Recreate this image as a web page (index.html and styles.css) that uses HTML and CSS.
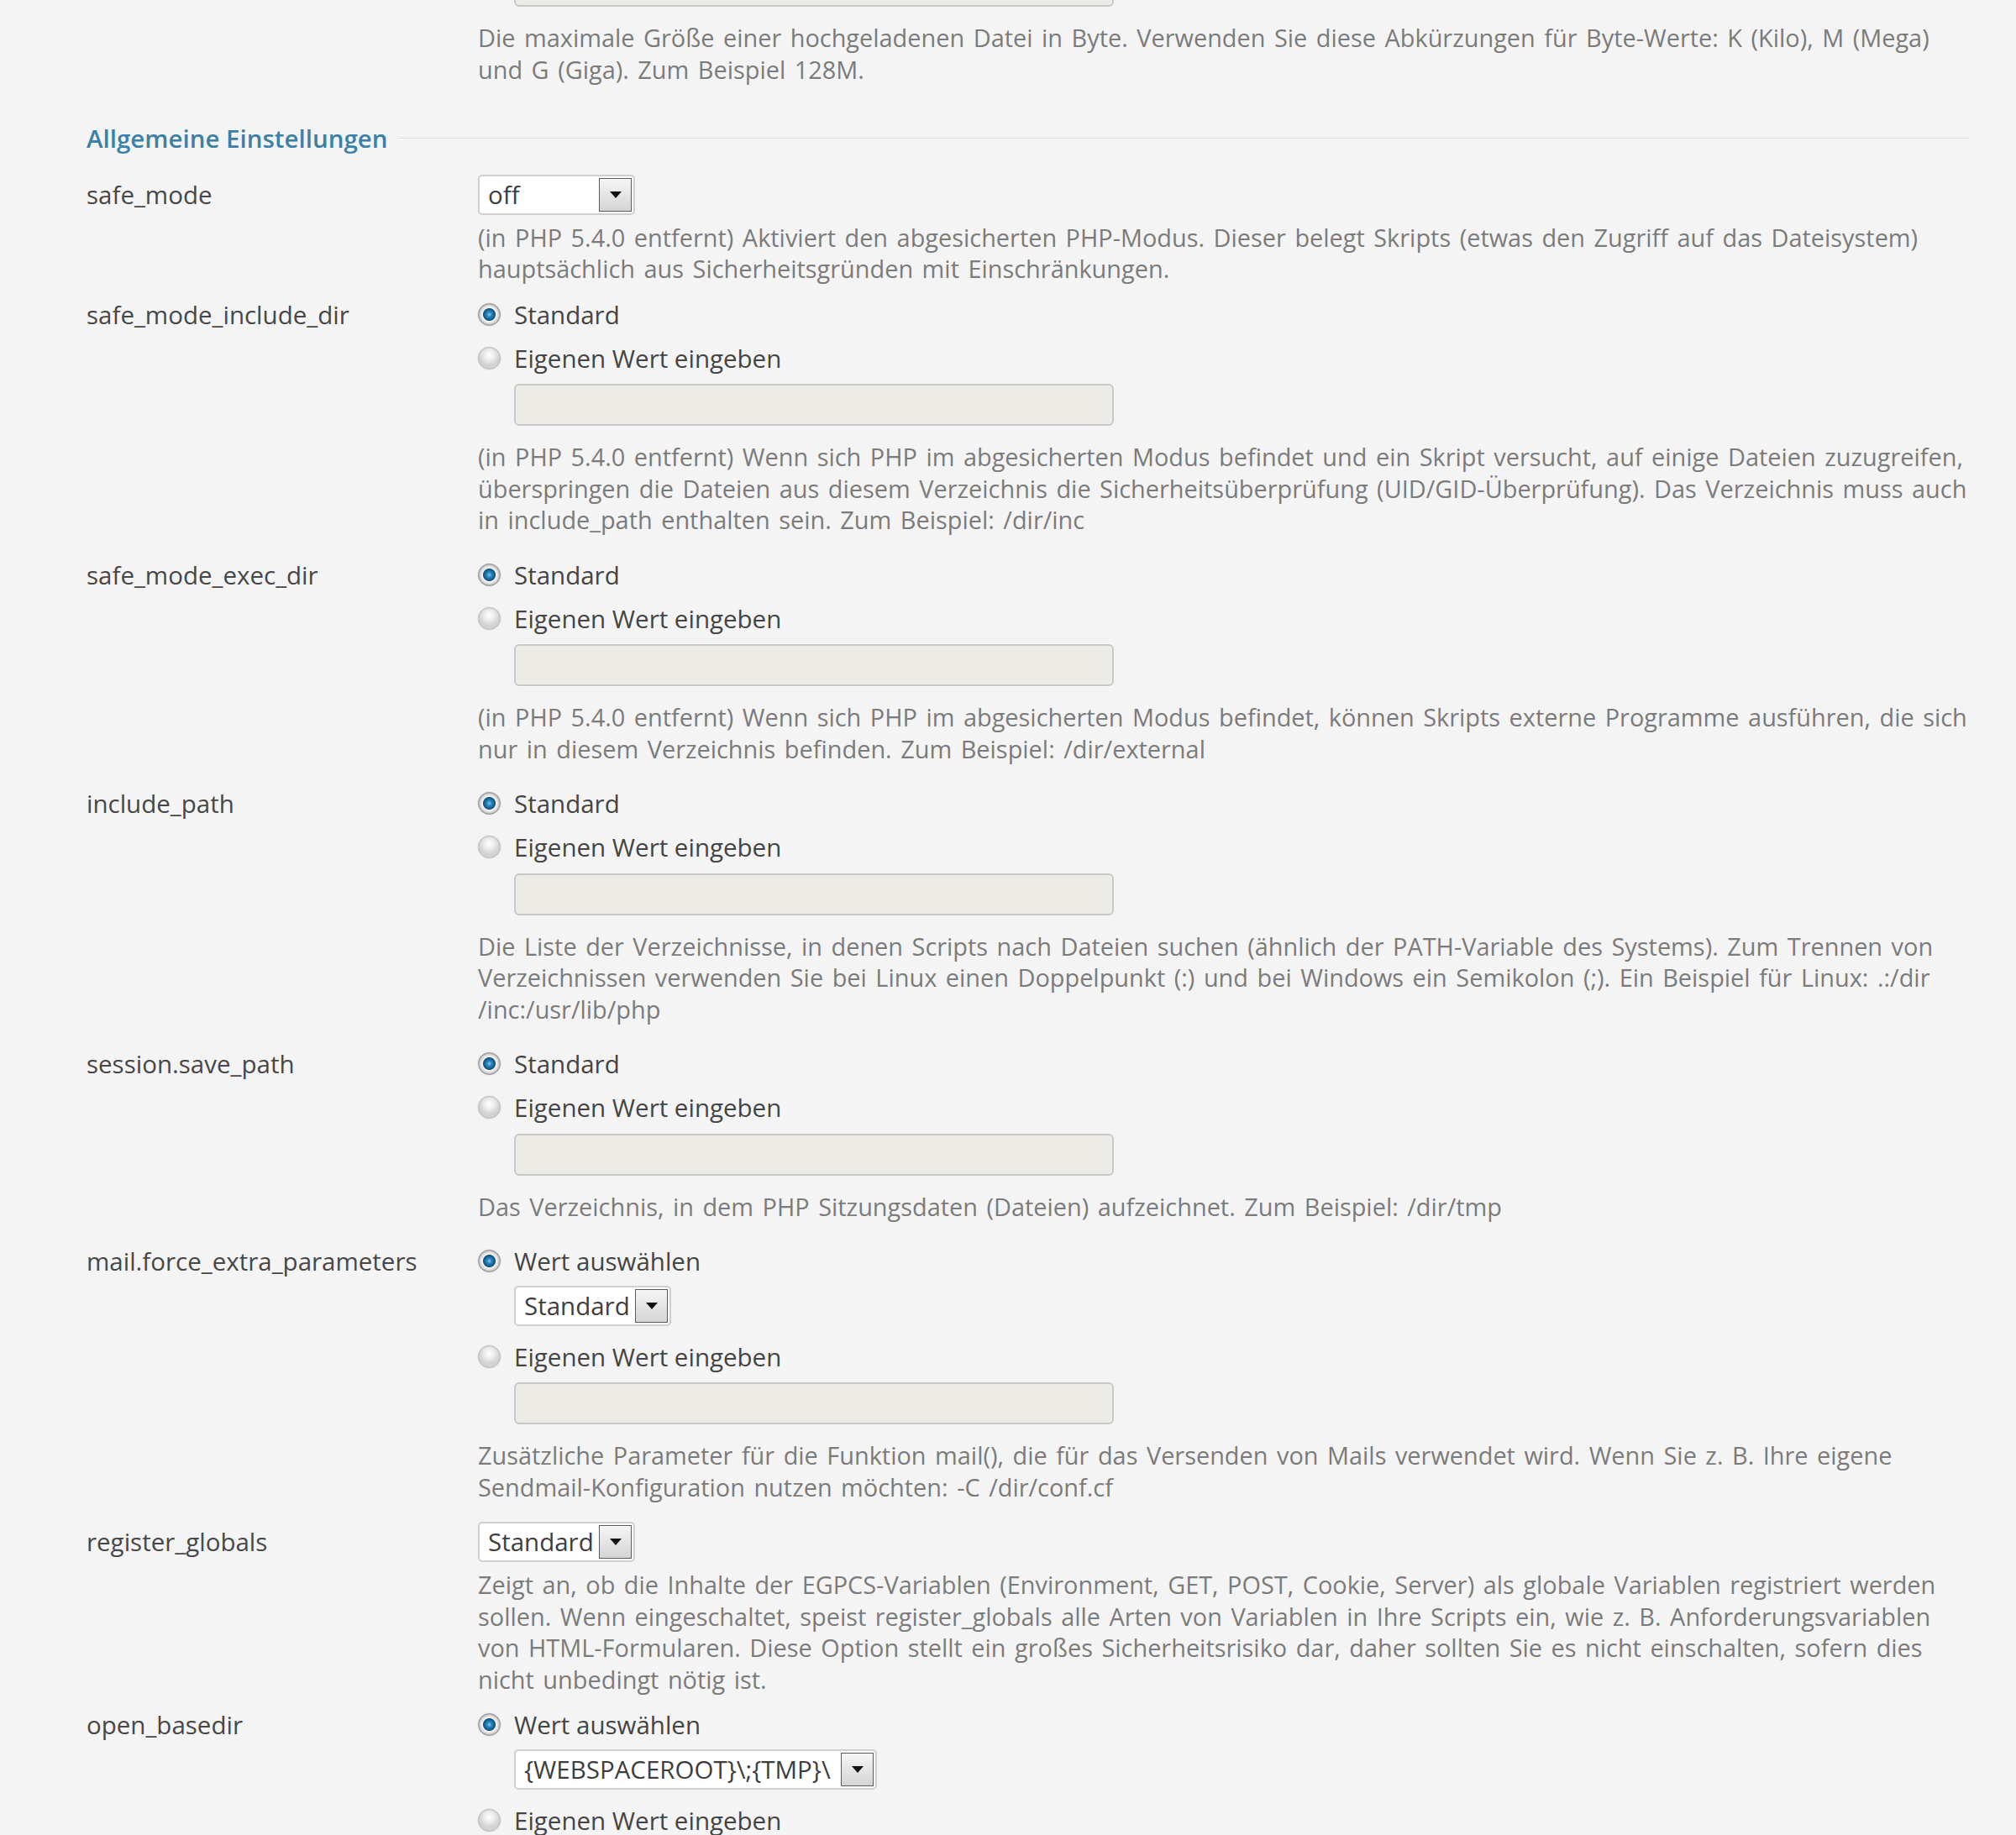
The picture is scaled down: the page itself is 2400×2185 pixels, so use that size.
FILE: index.html
```html
<!DOCTYPE html>
<html lang="de">

<head>
    <meta charset="UTF-8">
    <meta name="viewport" content="width=device-width, initial-scale=1.0">
    <title>PHP-Einstellungen</title>

    <link rel="stylesheet" href="styles.css">
</head>

<body>
    <div class="settings">

        <!-- tail of the previous group, cut off by the scroll position -->
        <div class="row row-radio">
            <div class="label"></div>
            <div class="field">
                <input class="text" type="text" disabled>
                <p class="hint">Die maximale Größe einer hochgeladenen Datei in Byte. Verwenden Sie diese Abkürzungen für Byte-Werte: K (Kilo), M (Mega) und G (Giga). Zum Beispiel 128M.</p>
            </div>
        </div>

        <h2 class="group-title">Allgemeine Einstellungen</h2>

        <div class="row">
            <div class="label">safe_mode</div>
            <div class="field">
                <div class="select"><span class="select-value">off</span><span class="select-btn"></span></div>
                <p class="hint">(in PHP 5.4.0 entfernt) Aktiviert den abgesicherten PHP-Modus. Dieser belegt Skripts (etwas den Zugriff auf das Dateisystem) hauptsächlich aus Sicherheitsgründen mit Einschränkungen.</p>
            </div>
        </div>

        <div class="row row-radio">
            <div class="label">safe_mode_include_dir</div>
            <div class="field">
                <label class="option"><span class="radio checked"></span>Standard</label>
                <label class="option"><span class="radio"></span>Eigenen Wert eingeben</label>
                <input class="text" type="text" disabled>
                <p class="hint">(in PHP 5.4.0 entfernt) Wenn sich PHP im abgesicherten Modus befindet und ein Skript versucht, auf einige Dateien zuzugreifen, überspringen die Dateien aus diesem Verzeichnis die Sicherheitsüberprüfung (UID/GID-Überprüfung). Das Verzeichnis muss auch in include_path enthalten sein. Zum Beispiel: /dir/inc</p>
            </div>
        </div>

        <div class="row row-radio">
            <div class="label">safe_mode_exec_dir</div>
            <div class="field">
                <label class="option"><span class="radio checked"></span>Standard</label>
                <label class="option"><span class="radio"></span>Eigenen Wert eingeben</label>
                <input class="text" type="text" disabled>
                <p class="hint">(in PHP 5.4.0 entfernt) Wenn sich PHP im abgesicherten Modus befindet, können Skripts externe Programme ausführen, die sich nur in diesem Verzeichnis befinden. Zum Beispiel: /dir/external</p>
            </div>
        </div>

        <div class="row row-radio">
            <div class="label">include_path</div>
            <div class="field">
                <label class="option"><span class="radio checked"></span>Standard</label>
                <label class="option"><span class="radio"></span>Eigenen Wert eingeben</label>
                <input class="text" type="text" disabled>
                <p class="hint">Die Liste der Verzeichnisse, in denen Scripts nach Dateien suchen (ähnlich der PATH-Variable des Systems). Zum Trennen von Verzeichnissen verwenden Sie bei Linux einen Doppelpunkt (:) und bei Windows ein Semikolon (;). Ein Beispiel für Linux: .:/dir /inc:/usr/lib/php</p>
            </div>
        </div>

        <div class="row row-radio">
            <div class="label">session.save_path</div>
            <div class="field">
                <label class="option"><span class="radio checked"></span>Standard</label>
                <label class="option"><span class="radio"></span>Eigenen Wert eingeben</label>
                <input class="text" type="text" disabled>
                <p class="hint">Das Verzeichnis, in dem PHP Sitzungsdaten (Dateien) aufzeichnet. Zum Beispiel: /dir/tmp</p>
            </div>
        </div>

        <div class="row row-radio">
            <div class="label">mail.force_extra_parameters</div>
            <div class="field">
                <label class="option"><span class="radio checked"></span>Wert auswählen</label>
                <div class="select select-inline"><span class="select-value">Standard</span><span class="select-btn"></span></div>
                <label class="option"><span class="radio"></span>Eigenen Wert eingeben</label>
                <input class="text" type="text" disabled>
                <p class="hint">Zusätzliche Parameter für die Funktion mail(), die für das Versenden von Mails verwendet wird. Wenn Sie z. B. Ihre eigene Sendmail-Konfiguration nutzen möchten: -C /dir/conf.cf</p>
            </div>
        </div>

        <div class="row">
            <div class="label">register_globals</div>
            <div class="field">
                <div class="select"><span class="select-value">Standard</span><span class="select-btn"></span></div>
                <p class="hint">Zeigt an, ob die Inhalte der EGPCS-Variablen (Environment, GET, POST, Cookie, Server) als globale Variablen registriert werden sollen. Wenn eingeschaltet, speist register_globals alle Arten von Variablen in Ihre Scripts ein, wie z. B. Anforderungsvariablen von HTML-Formularen. Diese Option stellt ein großes Sicherheitsrisiko dar, daher sollten Sie es nicht einschalten, sofern dies nicht unbedingt nötig ist.</p>
            </div>
        </div>

        <div class="row row-radio">
            <div class="label">open_basedir</div>
            <div class="field">
                <label class="option"><span class="radio checked"></span>Wert auswählen</label>
                <div class="select select-inline select-wide"><span class="select-value">{WEBSPACEROOT}\;{TMP}\</span><span class="select-btn"></span></div>
                <label class="option"><span class="radio"></span>Eigenen Wert eingeben</label>
                <input class="text" type="text" disabled>
            </div>
        </div>

    </div>
</body>

</html>
```

FILE: styles.css
```css
body {
    margin: 0;
    background-color: #f4f4f4;
    font-family: 'Open Sans', 'Liberation Sans', sans-serif;
    font-size: 29.5px;
    line-height: 37.5px;
    color: #4a4a4a;
    overflow: hidden;
}

.settings {
    margin-top: -42px;
    padding: 0 50px 0 103px;
}

.row {
    display: grid;
    grid-template-columns: 466px 1fr;
    margin-bottom: 17px;
}

.row-radio {
    padding-bottom: 11px;
}

.label {
    color: #474747;
}

.field {
    display: flex;
    flex-direction: column;
    align-items: flex-start;
}

.hint {
    margin: 18px 0 0;
    font-size: 28.9px;
    word-spacing: 3px;
    color: #7b7b7b;
}

.select + .hint {
    margin-top: 8px;
}

.group-title {
    display: flex;
    align-items: center;
    margin: 34px 7px 29px 0;
    font-size: 29.5px;
    font-weight: 600;
    line-height: 37.5px;
    color: #3b81a6;
}

.group-title::after {
    content: "";
    flex: 1;
    margin-left: 12px;
    border-top: 1px solid #dadada;
    border-bottom: 1px solid #ffffff;
}

/* radio buttons */
.option {
    display: flex;
    align-items: center;
    height: 37.5px;
    margin-bottom: 12px;
    color: #444444;
}

.option + .option {
    margin-top: 2.5px;
}

.radio {
    width: 27px;
    height: 27px;
    margin-right: 16px;
    box-sizing: border-box;
    border-radius: 50%;
    border: 1px solid #b4b4b4;
    background: radial-gradient(circle at 50% 35%, #ffffff 0, #ececec 6px, #d2d2d2 12px);
    box-shadow: 0 0 0 1px #ebebeb;
}

.radio.checked {
    border-color: #8c8c8c;
    background: radial-gradient(circle at 50% 50%, #7cc4ea 0, #2a86bd 3px, #125f92 6px, #0d4d78 7px, #f6f6f6 8px, #e4e4e4 10px, #b8b8b8 12.5px);
}

/* text inputs */
.text {
    display: block;
    width: 714px;
    height: 50px;
    margin: 0 0 0 43px;
    box-sizing: border-box;
    border: 2px solid #c9c9c6;
    border-radius: 6px;
    background-color: #ecebe5;
    font: inherit;
}

/* select boxes */
.select {
    display: flex;
    align-items: center;
    justify-content: space-between;
    width: 187px;
    height: 48px;
    margin-top: -5px;
    box-sizing: border-box;
    padding: 0 2px 0 10px;
    border: 2px solid #cfcfcf;
    border-radius: 5px;
    background-color: #ffffff;
    color: #3e3e3e;
}

.select-inline {
    margin: -2px 0 18px 43px;
}

.select-wide {
    width: 432px;
}

.select-value {
    white-space: nowrap;
}

.select-btn {
    display: flex;
    align-items: center;
    justify-content: center;
    flex: none;
    width: 39px;
    height: 40px;
    box-sizing: border-box;
    border: 1px solid #5b5b5b;
    background: linear-gradient(#f6f6f6, #d4d4d4);
}

.select-btn::after {
    content: "";
    border-left: 7px solid transparent;
    border-right: 7px solid transparent;
    border-top: 8px solid #111111;
}
```
